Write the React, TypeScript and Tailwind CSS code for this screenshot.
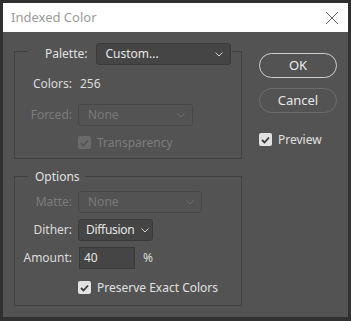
import React from "react";

const font = { fontFamily: '"Noto Sans", "Open Sans", sans-serif' };

function Chevron({ disabled }: { disabled?: boolean }) {
  return (
    <svg width="8" height="5" viewBox="0 0 8 5" className="shrink-0">
      <path d="M0.5 0.5 L4 4 L7.5 0.5" fill="none" stroke={disabled ? "#6e6e6e" : "#d0d0d0"} strokeWidth="1" />
    </svg>
  );
}

function Select({
  value,
  width,
  disabled,
  tight,
}: {
  value: string;
  width: string;
  disabled?: boolean;
  tight?: boolean;
}) {
  return (
    <div
      className={`${width} h-[22px] flex items-center justify-between ${
        tight ? "pl-[7px] pr-[3px]" : "pl-[9px] pr-[7px]"
      } rounded-[3px] border ${
        disabled ? "border-[#474747] bg-[#535353] text-[#7a7a7a]" : "border-[#3a3a3a] bg-[#454545] text-[#e6e6e6]"
      }`}
    >
      <span className={`leading-none ${tight ? "tracking-[-0.3px]" : ""}`}>{value}</span>
      <Chevron disabled={disabled} />
    </div>
  );
}

function Check({ disabled }: { disabled?: boolean }) {
  return (
    <div
      className={`w-[13px] h-[13px] shrink-0 rounded-[2px] flex items-center justify-center ${
        disabled ? "bg-[#6a6a6a]" : "bg-[#e2e2e2]"
      }`}
    >
      <svg width="9" height="8" viewBox="0 0 9 8">
        <path d="M1 4 L3.5 6.5 L8 1.5" fill="none" stroke={disabled ? "#555555" : "#3a3a3a"} strokeWidth="1.8" />
      </svg>
    </div>
  );
}

export default function App() {
  return (
    <div className="w-[351px] h-[321px] bg-[#303030] pt-[3px] pl-[3px] pr-[3px] pb-[4px] text-[12px]" style={font}>
      <div className="w-full h-full flex flex-col bg-[#535353]">
        {/* Title bar */}
        <div className="h-[29px] bg-white flex items-center justify-between pl-[8px] pr-[9px] shrink-0">
          <span className="text-[13px] text-[#9a9a9a]">Indexed Color</span>
          <svg width="14" height="14" viewBox="0 0 14 14">
            <path d="M1 1 L13 13 M13 1 L1 13" stroke="#666" strokeWidth="1" />
          </svg>
        </div>

        <div className="flex pl-[11px]">
          {/* Left column */}
          <div className="w-[228px] flex flex-col">
            {/* Group 1 */}
            <div className="mt-[19px] h-[108px] border border-[#404040] flex flex-col">
              <div className="-mt-[9px] ml-[13px] self-start flex items-center bg-[#535353] pl-[17px] pr-[1px]">
                <span className="text-[#e0e0e0] mr-[8px]">Palette:</span>
                <Select value="Custom..." width="w-[135px]" />
              </div>
              <div className="flex items-center h-[20px] mt-[9px]">
                <span className="w-[57px] text-right text-[#dcdcdc]">Colors:</span>
                <span className="ml-[8px] text-[#dcdcdc]">256</span>
              </div>
              <div className="flex items-center mt-[10px]">
                <span className="w-[57px] text-right text-[#7c7c7c]">Forced:</span>
                <div className="ml-[6px]">
                  <Select value="None" width="w-[115px]" disabled />
                </div>
              </div>
              <div className="flex items-center h-[17px] mt-[8px] ml-[63px]">
                <Check disabled />
                <span className="ml-[6px] text-[#7c7c7c]">Transparency</span>
              </div>
            </div>

            {/* Group 2 */}
            <div className="mt-[17px] h-[130px] border border-[#404040] flex flex-col">
              <div className="-mt-[9px] ml-[13px] self-start bg-[#535353] pl-[7px] pr-[5px] h-[17px] flex items-center text-[#e0e0e0]">
                Options
              </div>
              <div className="flex items-center mt-[6px]">
                <span className="w-[57px] text-right text-[#7c7c7c]">Matte:</span>
                <div className="ml-[6px]">
                  <Select value="None" width="w-[124px]" disabled />
                </div>
              </div>
              <div className="flex items-center mt-[6px]">
                <span className="w-[57px] text-right text-[#dcdcdc]">Dither:</span>
                <div className="ml-[6px]">
                  <Select value="Diffusion" width="w-[75px]" tight />
                </div>
              </div>
              <div className="flex items-center mt-[6px]">
                <span className="w-[57px] text-right text-[#dcdcdc]">Amount:</span>
                <div className="ml-[7px] w-[56px] h-[22px] border border-[#3a3a3a] bg-[#454545] flex items-center pl-[4px] text-[#e6e6e6]">
                  40
                </div>
                <span className="ml-[8px] text-[#dcdcdc]">%</span>
              </div>
              <div className="flex items-center h-[17px] mt-[10px] ml-[63px]">
                <Check />
                <span className="ml-[6px] text-[#e0e0e0]">Preserve Exact Colors</span>
              </div>
            </div>
          </div>

          {/* Right column */}
          <div className="ml-[17px] mt-[21px] flex flex-col w-[78px]">
            <div className="h-[25px] rounded-full border-[1.5px] border-[#cfcfcf] flex items-center justify-center text-[#ececec] text-[13px]">
              OK
            </div>
            <div className="mt-[10px] h-[25px] rounded-full border border-[#6c6c6c] flex items-center justify-center text-[#e6e6e6] text-[13px]">
              Cancel
            </div>
            <div className="mt-[18px] h-[17px] flex items-center">
              <Check />
              <span className="ml-[6px] text-[#e0e0e0]">Preview</span>
            </div>
          </div>
        </div>
      </div>
    </div>
  );
}
